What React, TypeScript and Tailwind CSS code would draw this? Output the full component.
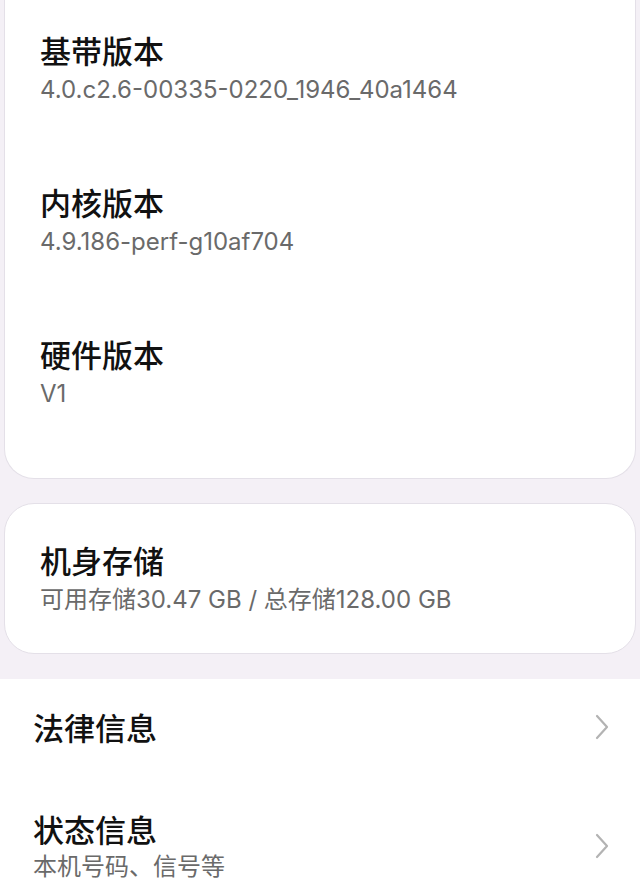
import React from "react";

const font = { fontFamily: '"Noto Sans CJK SC", "Noto Sans", sans-serif' };
const subFont = { fontFamily: 'Inter, "Noto Sans CJK SC", sans-serif' };

function Row({ title, sub }: { title: string; sub: string }) {
  return (
    <div className="flex h-[152px] flex-col pl-[35px] pt-[30px]">
      <div className="h-[40px] text-[31px] leading-[40px] font-medium text-[#111]">{title}</div>
      <div className="mt-[4px] h-[32px] text-[24px] leading-[32px] text-[#6a6a6a]" style={subFont}>
        {sub}
      </div>
    </div>
  );
}

function Chevron() {
  return (
    <svg width="16" height="26" viewBox="0 0 16 26" fill="none">
      <path d="M3 2 L13 13 L3 24" stroke="#b3b3b3" strokeWidth="2.2" strokeLinecap="round" strokeLinejoin="round" />
    </svg>
  );
}

export default function App() {
  return (
    <div className="h-[894px] w-[640px] overflow-hidden bg-[#f4f0f6]" style={font}>
      <div className="mx-[4px] rounded-b-[30px] border border-t-0 border-[#e4e0e8] bg-white pb-[22px]">
        <Row title="基带版本" sub="4.0.c2.6-00335-0220_1946_40a1464" />
        <Row title="内核版本" sub="4.9.186-perf-g10af704" />
        <Row title="硬件版本" sub="V1" />
      </div>
      <div className="mx-[4px] mt-[24px] h-[151px] rounded-[30px] border border-[#e4e0e8] bg-white pl-[35px] pt-[36px]">
        <div className="h-[40px] text-[31px] leading-[40px] font-medium text-[#111]">机身存储</div>
        <div className="mt-[4px] h-[32px] text-[24px] leading-[32px] text-[#6a6a6a]" style={subFont}>
          可用存储30.47 GB / 总存储128.00 GB
        </div>
      </div>
      <div className="mt-[25px] bg-white">
        <div className="flex items-center justify-between pl-[33px] pr-[30px] pt-[28px] pb-[34px]">
          <div className="h-[40px] text-[31px] leading-[40px] font-medium text-[#111]">法律信息</div>
          <Chevron />
        </div>
        <div className="flex items-center justify-between pl-[33px] pr-[30px] pt-[28px] pb-[20px]">
          <div className="flex flex-col">
            <div className="h-[40px] text-[31px] leading-[40px] font-medium text-[#111]">状态信息</div>
            <div className="mt-[2px] h-[32px] text-[24px] leading-[32px] text-[#6a6a6a]" style={subFont}>
              本机号码、信号等
            </div>
          </div>
          <Chevron />
        </div>
      </div>
    </div>
  );
}
